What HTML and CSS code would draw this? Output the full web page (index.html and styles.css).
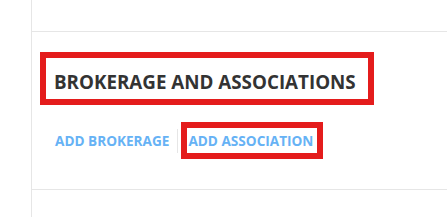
FILE: index.html
```html
<!DOCTYPE html>
<html lang="en">
<head>
  <meta charset="UTF-8">
  <title>Brokerage and Associations</title>
  <link rel="stylesheet" href="styles.css">
</head>
<body>
  <div class="page">
    <!-- brokerage / association section -->
    <section class="assoc-section">
      <h2 class="section-title marked">BROKERAGE AND ASSOCIATIONS</h2>
      <div class="link-row">
        <a href="#" class="add-link first">ADD BROKERAGE</a>
        <a href="#" class="add-link marked">ADD ASSOCIATION</a>
      </div>
    </section>
  </div>
</body>
</html>
```

FILE: styles.css
```css
body { margin: 0; background: #fff; font-family: 'Open Sans', 'Liberation Sans', Arial, sans-serif; }
.page { margin-left: 31px; border-left: 1px solid #e6e6e6; min-height: 100vh; padding-top: 31px; box-sizing: border-box; }
.assoc-section { border-top: 1px solid #e6e6e6; border-bottom: 1px solid #e6e6e6; padding: 20px 0 30px 8px; }
/* annotation boxes */
.marked { border: 6px solid #e41c1c; }
.section-title {
  display: inline-block; margin: 0; padding: 11px 12px 4px 8px;
  font-size: 18.8px; font-weight: 700; color: #333; line-height: 26px;
}
.link-row { display: flex; align-items: center; margin-top: 17px; }
.add-link { font-size: 13.6px; font-weight: 700; color: #66b2f5; text-decoration: none; line-height: 19px; }
.add-link.first { padding: 2px 8px 3px 15px; border-right: 1px solid #e6e6e6; }
.add-link.marked { margin-left: 3px; padding: 3px 4px 3px 1px; }
```
